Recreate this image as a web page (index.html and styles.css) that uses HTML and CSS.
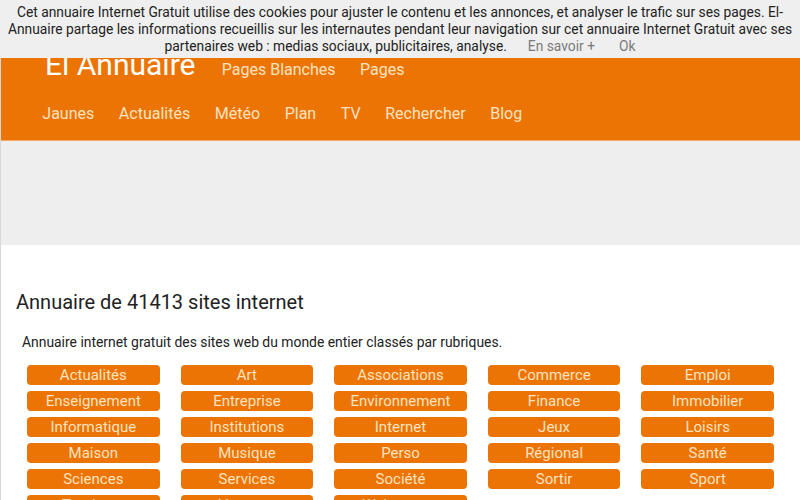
FILE: index.html
```html
<!DOCTYPE html>
<html lang="fr">
<head>
    <meta charset="UTF-8">
    <meta name="viewport" content="width=device-width, initial-scale=1.0">
    <title>El Annuaire - Annuaire Internet Gratuit</title>
    <link rel="stylesheet" href="styles.css">
</head>
<body>
    <div class="cookie-bar">
        Cet annuaire Internet Gratuit utilise des cookies pour ajuster le contenu et les annonces, et analyser le trafic sur ses pages. El-Annuaire partage les informations recueillis sur les internautes pendant leur navigation sur cet annuaire Internet Gratuit avec ses partenaires web : medias sociaux, publicitaires, analyse.<a href="#" class="cookie-link">En savoir +</a><a href="#" class="cookie-link">Ok</a>
    </div>

    <div class="page">
        <div class="header">
            <div class="nav-row">
                <a href="#" class="logo">El Annuaire</a>
                <a href="#" class="nav-link">Pages Blanches</a>
                <a href="#" class="nav-link">Pages</a>
            </div>
            <div class="nav-row second">
                <a href="#" class="nav-link">Jaunes</a>
                <a href="#" class="nav-link">Actualités</a>
                <a href="#" class="nav-link">Météo</a>
                <a href="#" class="nav-link">Plan</a>
                <a href="#" class="nav-link">TV</a>
                <a href="#" class="nav-link">Rechercher</a>
                <a href="#" class="nav-link">Blog</a>
            </div>
        </div>

        <div class="ad-space"></div>

        <div class="content">
            <h1>Annuaire de 41413 sites internet</h1>
            <p class="intro">Annuaire internet gratuit des sites web du monde entier classés par rubriques.</p>
            <div class="categories"></div>
        </div>
    </div>

    <script>
        const categories = [
            'Actualités', 'Art', 'Associations', 'Commerce', 'Emploi',
            'Enseignement', 'Entreprise', 'Environnement', 'Finance', 'Immobilier',
            'Informatique', 'Institutions', 'Internet', 'Jeux', 'Loisirs',
            'Maison', 'Musique', 'Perso', 'Régional', 'Santé',
            'Sciences', 'Services', 'Société', 'Sortir', 'Sport',
            'Tourisme', 'Voyages', 'Webmaster'
        ];

        const grid = document.querySelector('.categories');

        categories.forEach(name => {
            const link = document.createElement('a');
            link.href = '#';
            link.classList.add('category');
            link.textContent = name;
            grid.appendChild(link);
        });
    </script>
</body>
</html>
```

FILE: styles.css
```css
body {
    font-family: Roboto, "Liberation Sans", sans-serif;
    margin: 0;
    padding: 0;
    background-color: #fff;
    color: #222;
}

a {
    text-decoration: none;
}

.cookie-bar {
    position: fixed;
    top: 0;
    left: 0;
    right: 0;
    z-index: 10;
    background-color: #efefef;
    color: #222;
    font-size: 13.8px;
    line-height: 16.8px;
    text-align: center;
    padding: 4px 2px 4px;
}

.cookie-link {
    color: #7a7a7a;
    margin-left: 21px;
}

.cookie-link + .cookie-link {
    margin-left: 24px;
}

.page {
    border-left: 1px solid #d8d8d8;
}

.header {
    background-color: #ec7404;
    border-bottom: 1px solid #f3a764;
    padding: 46px 0 14px 29px;
}

.nav-row {
    display: flex;
    align-items: baseline;
}

.nav-row.second {
    margin-top: 18px;
}

.logo {
    color: #fff;
    font-size: 30px;
    line-height: 38px;
    padding: 0 14px 0 15px;
}

.nav-link {
    color: #fde3c0;
    font-size: 16px;
    line-height: 24px;
    padding: 0 12.3px;
}

.ad-space {
    height: 104px;
    background-color: #eee;
}

.content {
    padding: 45px 16px 20px;
}

.content h1 {
    font-size: 20px;
    font-weight: normal;
    line-height: 24px;
    margin: 0 0 0 -1px;
}

.intro {
    font-size: 13.9px;
    line-height: 20px;
    margin: 18px 0 0;
    padding-left: 5px;
}

.categories {
    display: grid;
    grid-template-columns: repeat(5, 1fr);
    column-gap: 21px;
    row-gap: 6px;
    margin: 13px 10px 0;
}

.category {
    background-color: #ec7404;
    color: #fde3c0;
    font-size: 15px;
    line-height: 20px;
    text-align: center;
    border-radius: 4px;
}
```
